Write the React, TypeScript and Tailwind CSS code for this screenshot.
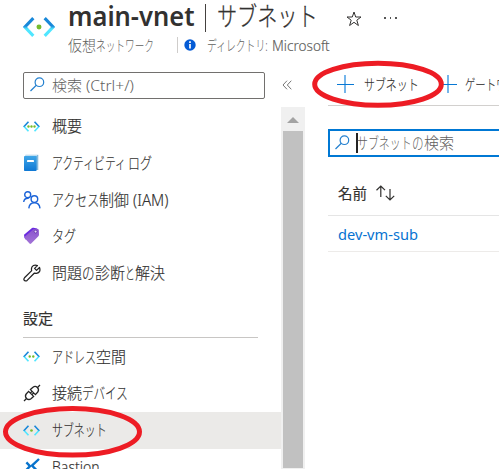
import { useLayoutEffect, useRef, type ReactNode } from 'react';

function Fit({ w, children, className = '' }: { w: number; children: ReactNode; className?: string }) {
  const outer = useRef<HTMLSpanElement>(null);
  const inner = useRef<HTMLSpanElement>(null);
  useLayoutEffect(() => {
    if (!outer.current || !inner.current) return;
    outer.current.style.width = `${w}px`;
    inner.current.style.transform = `scaleX(${w / inner.current.offsetWidth})`;
  }, [w]);
  return (
    <span ref={outer} className={`inline-block shrink-0 whitespace-pre ${className}`}>
      <span ref={inner} className="inline-block origin-left whitespace-pre">
        {children}
      </span>
    </span>
  );
}

function VnetIcon({ size, dots }: { size: number; dots: number }) {
  const xs = dots === 3 ? [5.8, 9, 12.2] : dots === 2 ? [7.1, 10.9] : [9];
  const r = dots === 1 ? 1.4 : 1.25;
  const id = `vnet${size}${dots}`;
  return (
    <svg width={size} height={size} viewBox="0 0 18 18" className="shrink-0">
      <defs>
        <linearGradient id={id} gradientUnits="userSpaceOnUse" x1="0" y1="3.5" x2="0" y2="14.5">
          <stop offset="0.45" stopColor="#1988d9" />
          <stop offset="0.6" stopColor="#50e6ff" />
        </linearGradient>
      </defs>
      <path d="M5.8 4 L1.1 9 L5.8 14 M12.2 4 L16.9 9 L12.2 14" fill="none" stroke={`url(#${id})`} strokeWidth="1.75" />
      {xs.map((x) => (
        <circle key={x} cx={x} cy="9" r={r} fill="#76bc2d" />
      ))}
    </svg>
  );
}

function LogIcon() {
  return (
    <svg width="17" height="18" viewBox="0 0 17 18">
      <defs>
        <linearGradient id="book" x1="0" y1="0" x2="0" y2="1">
          <stop stopColor="#3fa6e8" />
          <stop offset="1" stopColor="#0f78d4" />
        </linearGradient>
      </defs>
      <path d="M2.5 .8H15.3V16H2.5z" fill="#83b9dd" />
      <path d="M2.5 1.5H14" stroke="#d8ecf8" strokeWidth=".7" />
      <rect x="1" y="2" width="12.6" height="15" rx=".8" fill="url(#book)" />
      <rect x="4" y="6" width="7" height="2" rx=".4" fill="#fff" />
    </svg>
  );
}

function PeopleIcon() {
  return (
    <svg width="18" height="18" viewBox="0 0 18 18" fill="none" stroke="#1b63d8" strokeWidth="1.4">
      <circle cx="4.7" cy="3.7" r="3" />
      <path d="M.7 11C1 8.2 3 7 5.7 7.2" />
      <circle cx="11.4" cy="8.1" r="3.3" />
      <path d="M5.8 17.4C6.2 13.7 8.1 11.7 11.4 11.7S16.6 13.7 17 17.4" />
    </svg>
  );
}

function TagIcon() {
  return (
    <svg width="18" height="18" viewBox="0 0 18 18">
      <defs>
        <linearGradient id="tag" x1="0" y1="0" x2="0" y2="1">
          <stop stopColor="#8a52cf" />
          <stop offset="1" stopColor="#a274d6" />
        </linearGradient>
      </defs>
      <path d="M1 7.7 9 1Q9.6.6 10.5.8L14.2 1.6 8 9.5 2.5 12.4 1.4 10.8z" fill="#6b2be0" />
      <path d="M2 9.6 10.3 2.3 14.4 1.7Q15.7 1.8 15.8 3.1L16 7.8Q16 8.6 15.4 9.2L8.2 16.6Q7.3 17.4 6.5 16.6L2 11.6z" fill="url(#tag)" />
      <circle cx="12.6" cy="4.6" r="1.4" fill="#e5d5f5" stroke="#5c2aa0" strokeWidth=".7" />
    </svg>
  );
}

function WrenchIcon() {
  return (
    <svg width="18" height="18" viewBox="0 0 18 18" fill="none" stroke="#222" strokeWidth="1.25" strokeLinejoin="round">
      <path d="M14.4 1.6 11.6 4.4 13.5 6.4 16.5 3.5Q18.2 8.3 13.5 9.4L11.2 9.2 4.1 16.4Q2.8 17.5 1.5 16.4T1.5 13.8L8.7 6.6Q7.7 3.2 10.4 1.5 12.3.5 14.4 1.6Z" />
    </svg>
  );
}

function PlugIcon() {
  return (
    <svg width="18" height="18" viewBox="0 0 18 18" fill="none" stroke="#242424" strokeWidth="1.3">
      <path d="M1 17 4 14M14 4 17 1" />
      <path d="M7.4 5.6 10 3.2Q12.2 1.6 14.4 3.4 16.4 5.7 14.8 8L12.4 10.6zM5.6 7.4 3.2 10Q1.6 12.2 3.4 14.4 5.7 16.4 8 14.8L10.6 12.4zM7.3 9.1 9.1 7.3M8.9 10.7 10.7 8.9" />
    </svg>
  );
}

function BastionIcon() {
  return (
    <svg width="18" height="18" viewBox="0 0 18 18" fill="none" stroke="#0873cc" strokeWidth="2.4">
      <path d="M3.4 4.4 7 8.2 3.4 12" />
      <path d="M16 1 9 7.6 15.6 14.2" />
    </svg>
  );
}

function SearchIcon({ className = '' }: { className?: string }) {
  return (
    <svg width="15" height="15" viewBox="0 0 15 15" fill="none" stroke="#2480cf" strokeWidth="1.2" className={`shrink-0 ${className}`}>
      <circle cx="9.4" cy="5.2" r="4.3" />
      <path d="M6.3 8.3.5 14" />
    </svg>
  );
}

function Plus() {
  return (
    <svg width="17" height="18" viewBox="0 0 17 18" className="block shrink-0">
      <path d="M8 0V18" stroke="#75b5ea" strokeWidth="2" />
      <path d="M0 9.5H17" stroke="#0878d4" strokeWidth="1" />
    </svg>
  );
}

function Item({ icon, children, active = false }: { icon: ReactNode; children: ReactNode; active?: boolean }) {
  return (
    <li className={`flex h-[36.7px] shrink-0 items-center pl-[23px] ${active ? 'bg-[#ebeae8]' : ''}`}>
      <span className="flex w-[29px] shrink-0 items-center">{icon}</span>
      <span className="flex whitespace-nowrap text-[15.5px] leading-6 text-[#323130] [-webkit-text-stroke:0.15px_#323130]">{children}</span>
    </li>
  );
}

export default function App() {
  return (
    <div className="relative flex h-[469px] w-[499px] flex-col overflow-hidden bg-white font-['Noto_Sans','Noto_Sans_CJK_JP',sans-serif] font-light text-[#323130]">
      <header className="flex h-[66px] shrink-0 pl-[23px]">
        <div className="w-[45px] pt-[11px]">
          <VnetIcon size={32} dots={1} />
        </div>
        <div>
          <div className="flex h-8 items-center whitespace-pre text-[26.5px] leading-[40px]">
            <Fit w={127} className="font-semibold">main-vnet</Fit>
            <span className="ml-[9.5px] mr-[11px] mt-[3px] h-[28px] w-[1.5px] bg-[#44413f]" />
            <Fit w={101} className="[-webkit-text-stroke:0.3px_#323130]">サブネット</Fit>
            <svg width="16" height="16" viewBox="0 0 16 16" fill="none" stroke="#323130" className="ml-[28px] mt-[5px]">
              <path d="M8 1 9.7 6H15L10.8 9.2 12.4 14.5 8 11.3 3.6 14.5 5.2 9.2 1 6H6.3Z" />
            </svg>
            <span className="ml-[22px] mt-[4px] flex gap-1">
              <i className="size-[1.5px] bg-[#555]" />
              <i className="size-[1.5px] bg-[#555]" />
              <i className="size-[1.5px] bg-[#555]" />
            </span>
          </div>
          <div className="flex h-[25px] items-center text-[14.5px] leading-5 text-[#605e5c]">
            <Fit w={28}>仮想</Fit>
            <Fit w={58}>ネットワーク</Fit>
            <span className="ml-[23px] h-4 w-px bg-[#cfcdcb]" />
            <svg width="12" height="12" viewBox="0 0 12 12" className="ml-[6px] mr-[11px]">
              <circle cx="6" cy="6" r="5.7" fill="#055bd5" />
              <path d="M6 5V9.5M6 2.3V4" stroke="#fff" strokeWidth="1.7" />
            </svg>
            <Fit w={61}>ディレクトリ:</Fit>
            <Fit w={58} className="ml-[4px] [-webkit-text-stroke:0.15px_#605e5c]">Microsoft</Fit>
          </div>
        </div>
      </header>
      <div className="flex min-h-0 flex-1">
        <aside className="flex w-[305px] shrink-0 flex-col">
          <div className="flex h-[41px] shrink-0 items-start pl-[23px] pt-[6px]">
            <div className="flex h-[27px] w-[242px] items-center rounded-[2px] border border-[#72706e] pb-[2px] pl-[6px] text-[15px] leading-5 text-[#605e5c]">
              <SearchIcon className="mr-[7px]" />
              <Fit w={30}>検索</Fit>
              <Fit w={48} className="ml-[4px]">(Ctrl+/)</Fit>
            </div>
            <svg width="10" height="10" viewBox="0 0 10 10" fill="none" stroke="#777" className="ml-[17px] mt-[8px]">
              <path d="M5 .7 1 5 5 9.3M9.3.7 5.3 5 9.3 9.3" />
            </svg>
          </div>
          <div className="flex min-h-0 flex-1">
            <nav className="w-[281px] overflow-hidden">
              <ul className="flex flex-col pt-[1px]">
                <Item icon={<VnetIcon size={17} dots={3} />}><Fit w={30}>概要</Fit></Item>
                <Item icon={<LogIcon />}><Fit w={74}>アクティビティ</Fit><Fit w={24} className="ml-[2px]">ログ</Fit></Item>
                <Item icon={<PeopleIcon />}><Fit w={47}>アクセス</Fit><Fit w={30}>制御</Fit><Fit w={35} className="ml-[4px]">(IAM)</Fit></Item>
                <Item icon={<TagIcon />}><Fit w={24}>タグ</Fit></Item>
                <Item icon={<WrenchIcon />}><Fit w={30}>問題</Fit><Fit w={13}>の</Fit><Fit w={30}>診断</Fit><Fit w={10}>と</Fit><Fit w={30}>解決</Fit></Item>
              </ul>
              <h2 className="ml-[23px] mr-[23px] mt-[9px] h-[38px] border-b border-[#c8c6c4] pt-[8px] text-[15px] font-normal leading-5 [-webkit-text-stroke:0.15px_#323130]">
                <Fit w={30}>設定</Fit>
              </h2>
              <ul className="flex flex-col">
                <Item icon={<VnetIcon size={17} dots={2} />}><Fit w={44}>アドレス</Fit><Fit w={30}>空間</Fit></Item>
                <Item icon={<PlugIcon />}><Fit w={30}>接続</Fit><Fit w={46}>デバイス</Fit></Item>
                <Item active icon={<VnetIcon size={17} dots={1} />}><Fit w={55}>サブネット</Fit></Item>
                <Item icon={<BastionIcon />}><Fit w={48}>Bastion</Fit></Item>
              </ul>
            </nav>
            <div className="flex w-6 flex-col items-center bg-[#f0f0f0] pb-px">
              <div className="flex h-6 shrink-0 items-center pt-[2px]">
                <svg width="12" height="6" viewBox="0 0 12 6"><path d="M0 6 6 0l6 6z" fill="#a3a3a3" /></svg>
              </div>
              <div className="w-5 flex-1 bg-[#c1c1c1]" />
            </div>
          </div>
        </aside>
        <main className="ml-[23px] min-w-0 flex-1 overflow-hidden">
          <div className="flex h-[40px] items-center border-b border-[#d2d0ce] pb-[3px] pl-[9px] text-[14.5px] leading-5 [-webkit-text-stroke:0.15px_#323130]">
            <Plus />
            <Fit w={55} className="ml-[10px]">サブネット</Fit>
            <span className="ml-[21px]"><Plus /></span>
            <Fit w={62} className="ml-[8px]">ゲートウェイ</Fit>
          </div>
          <div className="mt-[23px] flex h-7 w-[200px] items-center border-2 border-[#0078d4] pb-px pl-[5px] text-[15.5px] leading-5 text-[#605e5c]">
            <SearchIcon />
            <span className="ml-[6px] h-5 w-[2px] bg-[#252423]" />
            <Fit w={55} className="-ml-px">サブネット</Fit><Fit w={12}>の</Fit><Fit w={30}>検索</Fit>
          </div>
          <div className="flex h-[59px] items-center border-b border-[#e5e5e5] pl-[10px] pt-[14px] text-[15px] font-normal leading-5 [-webkit-text-stroke:0.15px_#323130]">
            <Fit w={29}>名前</Fit>
            <svg width="19" height="16" viewBox="0 0 19 16" fill="none" stroke="#323130" strokeWidth="1.2" className="ml-[9px]">
              <path d="M4.8 12V1M.5 5.2 4.8 1 9 5.2M14 4V15M9.8 10.8 14 15 18.2 10.8" />
            </svg>
          </div>
          <div className="flex h-9 items-center border-b border-[#edebe9] pl-[10px] text-[15px] leading-5 text-[#0873d1]">
            <Fit w={80} className="font-normal">dev-vm-sub</Fit>
          </div>
        </main>
      </div>
      <svg width="499" height="469" className="pointer-events-none absolute inset-0" fill="none" stroke="#ed1c24" strokeWidth="5">
        <ellipse cx="378" cy="84.3" rx="63.3" ry="21" />
        <ellipse cx="72.5" cy="431.8" rx="67" ry="23.3" />
      </svg>
    </div>
  );
}
